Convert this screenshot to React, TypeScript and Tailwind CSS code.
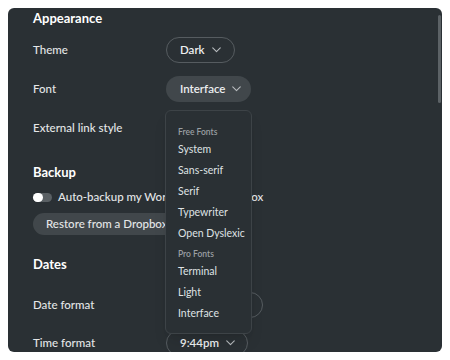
import React from "react";

const Chevron = () => (
  <svg width="9" height="6" viewBox="0 0 9 6" fill="none" className="shrink-0">
    <path d="M0.75 0.9 L4.5 4.6 L8.25 0.9" stroke="#b8bcbf" strokeWidth="1.1" strokeLinecap="round" strokeLinejoin="round" />
  </svg>
);

const Row = ({ label, children, h = "h-[39px]" }: { label: string; children?: React.ReactNode; h?: string }) => (
  <div className={`flex ${h} items-center`}>
    <div className="w-[133px] shrink-0 whitespace-nowrap text-[11.5px] font-medium text-[#e4e6e7]">{label}</div>
    <div className="relative flex items-center">{children}</div>
  </div>
);

export default function App() {
  const free = ["System", "Sans-serif", "Serif", "Typewriter", "Open Dyslexic"];
  const pro = ["Terminal", "Light", "Interface"];
  return (
    <div className="h-[360px] w-[450px] bg-white p-2" style={{ fontFamily: "Lato, 'Noto Sans', sans-serif" }}>
      <div className="relative h-[344px] overflow-hidden rounded-md bg-[#2a3034]">
        <div className="absolute right-[1px] top-[7px] z-20 h-[88px] w-[3px] rounded-full bg-[#5c6266]" />
        <div className="pl-[25px]">
          <div className="flex h-[22px] items-center text-[13px] font-bold text-white">Appearance</div>
          <Row label="Theme">
            <button className="flex h-[26px] items-center gap-[7px] whitespace-nowrap rounded-full border border-[#565c60] pl-[13px] pr-[13px] text-[11.5px] font-semibold text-[#eceeef]">
              Dark <Chevron />
            </button>
          </Row>
          <Row label="Font">
            <button className="flex h-[26px] w-[85px] items-center gap-[7px] whitespace-nowrap rounded-full bg-[#41474b] pl-[14px] text-[11.5px] font-semibold text-[#eceeef]">
              Interface <Chevron />
            </button>
            <div className="absolute left-[-1px] top-[34px] z-10 w-[87px] rounded-md border border-[#3d4347] bg-[#2a3034] pb-[8px] pt-[15px] shadow-lg">
              <div className="flex h-[14px] items-center whitespace-nowrap pl-[12px] text-[8.5px] font-semibold text-[#9a9fa3]">Free Fonts</div>
              {free.map((f) => (
                <div key={f} className="flex h-[21px] items-center whitespace-nowrap pl-[12px] text-[10.5px] text-[#dfe2e4]">{f}</div>
              ))}
              <div className="mt-[3px] flex h-[14px] items-center whitespace-nowrap pl-[12px] text-[8.5px] font-semibold text-[#9a9fa3]">Pro Fonts</div>
              {pro.map((f) => (
                <div key={f} className="flex h-[21px] items-center whitespace-nowrap pl-[12px] text-[10.5px] text-[#dfe2e4]">{f}</div>
              ))}
            </div>
          </Row>
          <Row label="External link style" />
          <div className="mt-[15px] flex h-[22px] items-center text-[13px] font-bold text-white">Backup</div>
          <div className="mt-[3px] flex h-[20px] items-center gap-[6px]">
            <div className="relative h-[9px] w-[19px] rounded-full bg-[#5a6064]">
              <div className="absolute left-0 top-0 h-[9px] w-[10px] rounded-full bg-white" />
            </div>
            <span className="whitespace-nowrap text-[11.5px] font-medium text-[#e4e6e7]">Auto-backup my WorkFlowy to Dropbox</span>
          </div>
          <button className="mt-[6px] flex h-[22px] items-center whitespace-nowrap rounded-full bg-[#41474b] px-[13px] text-[11.5px] font-medium text-[#e4e6e7]">
            Restore from a Dropbox backup
          </button>
          <div className="mt-[19px] flex h-[22px] items-center text-[13px] font-bold text-white">Dates</div>
          <Row label="Date format" h="h-[38px] mt-[10px]">
            <button className="flex h-[26px] items-center gap-[7px] whitespace-nowrap rounded-full border border-[#565c60] pl-[13px] pr-[10px] text-[11.5px] font-semibold text-[#eceeef]">
              Wed, Jun 4 <Chevron />
            </button>
          </Row>
          <Row label="Time format" h="h-[38px]">
            <button className="flex h-[26px] items-center gap-[7px] whitespace-nowrap rounded-full border border-[#565c60] pl-[13px] pr-[12px] text-[11.5px] font-semibold text-[#eceeef]">
              9:44pm <Chevron />
            </button>
          </Row>
        </div>
      </div>
    </div>
  );
}
